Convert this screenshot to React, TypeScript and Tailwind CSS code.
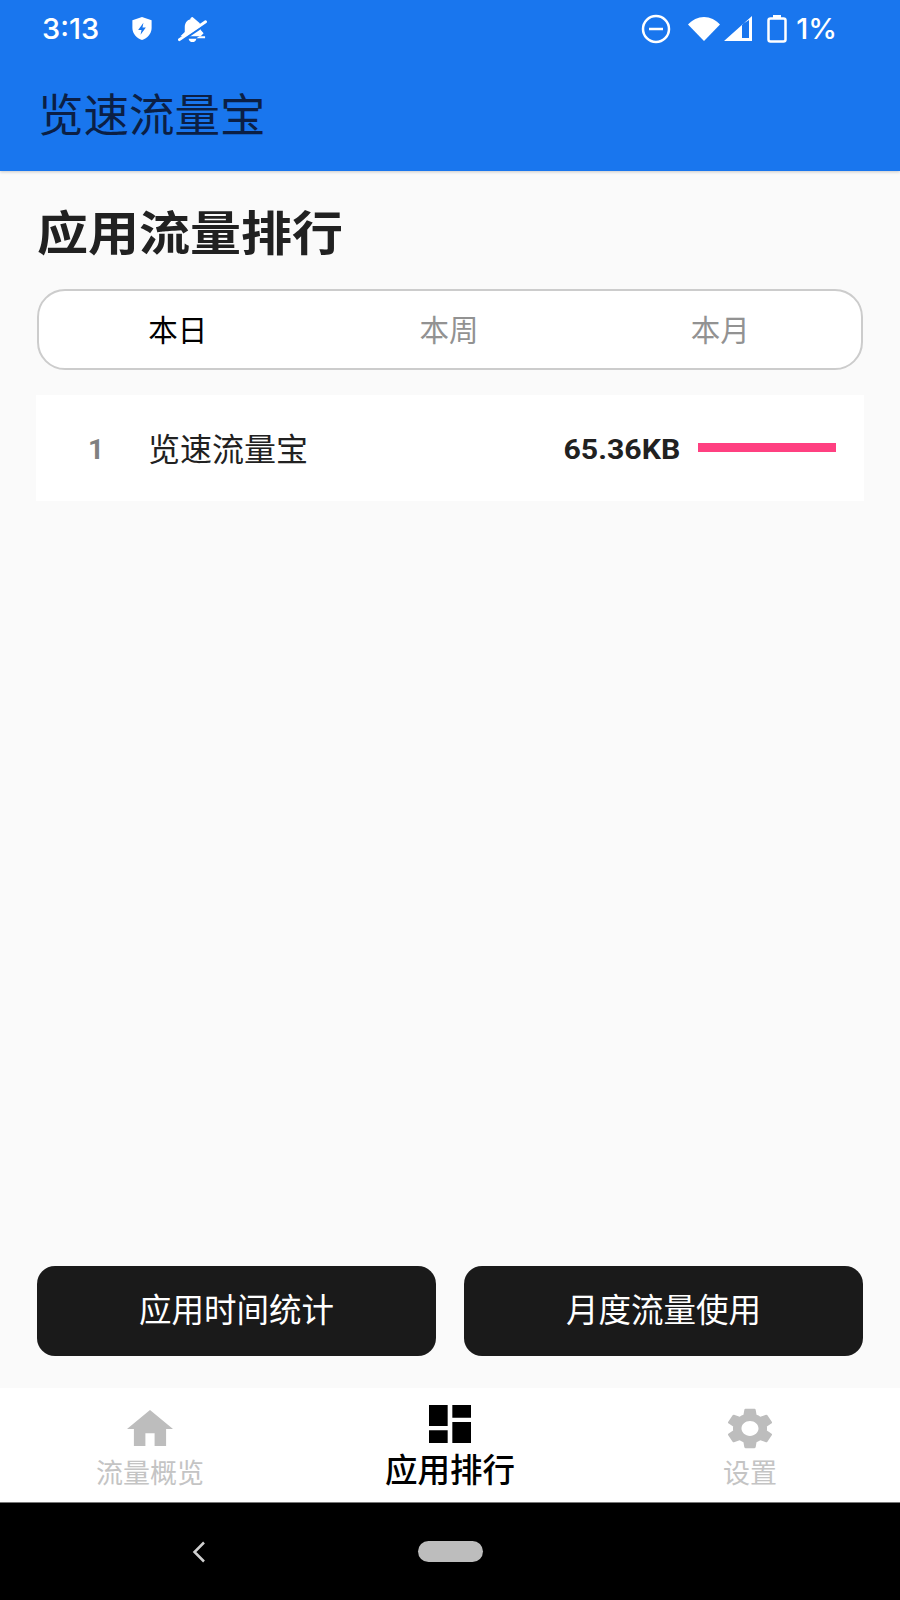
import React from "react";

const cjk = "font-['Roboto','Noto_Sans_CJK_SC',sans-serif]";

function StatusBar() {
  return (
    <div className="flex h-[56px] items-center pl-[42px] pr-[63px] pt-[1px] text-white">
      <span className="text-[29px] font-medium leading-none font-['Inter',sans-serif]">3:13</span>
      <svg className="ml-[31px]" width="24" height="25" viewBox="0 0 24 26" fill="none">
        <path d="M12 1 2 4.500v8C2 18.500 6.500 23 12 25c5.500-2 10-6.500 10-12.500v-8z" fill="#fff" />
        <path d="M13.500 7 8 14.500h3.500l-1 5 5.500-7.500h-3.500z" fill="#1976ee" />
      </svg>
      <svg className="ml-[24px] mt-[1px]" width="29" height="29" viewBox="0 0 30 28" fill="none">
        <path d="M15 1c-1.300 0-2.200 1-2.200 2.300C9 4.300 7 7.500 7 11.500v5L2.500 21h21l3-3-3-3.500v-3c0-1.500-.500-3-1.200-4.300z" fill="#fff" />
        <path d="M11 23.500h8c-.400 2.200-2 3.500-4 3.500s-3.600-1.300-4-3.500zM22 21h6v2H19z" fill="#fff" />
        <path d="M4 25.500 29 8.500" stroke="#1976ee" strokeWidth="2.500" />
        <path d="M1.500 24.500 28.500 6" stroke="#fff" strokeWidth="3" strokeLinecap="round" />
      </svg>
      <div className="ml-auto flex items-center">
        <svg width="30" height="30" viewBox="0 0 30 30" fill="none">
          <circle cx="15" cy="15" r="13" stroke="#fff" strokeWidth="2.500" />
          <path d="M8 15h14" stroke="#fff" strokeWidth="2.500" />
        </svg>
        <svg className="ml-[16px]" width="34" height="26" viewBox="0 0 34 26">
          <path d="M17 25 1 8.500C5 4 11 1 17 1s12 3 16 7.500z" fill="#fff" />
        </svg>
        <svg className="ml-[3px]" width="28" height="26" viewBox="0 0 28 26">
          <path d="M0 25 28 0v25zM18 8.500V22h7V4z" fill="#fff" fillRule="evenodd" />
        </svg>
        <svg className="ml-[15px]" width="20" height="28" viewBox="0 0 20 28" fill="none">
          <path d="M6 0h8v3H6z" fill="#fff" />
          <rect x="1.500" y="3.500" width="17" height="23" rx="2" stroke="#fff" strokeWidth="2.500" />
        </svg>
        <span className="ml-[9px] text-[29px] font-medium leading-none font-['Inter',sans-serif]">1%</span>
      </div>
    </div>
  );
}

function NavItem({ children }: { children: React.ReactNode }) {
  return <div className="flex flex-1 flex-col items-center">{children}</div>;
}

export default function App() {
  return (
    <div className={`flex h-[1600px] w-[900px] flex-col bg-[#fafafa] ${cjk}`}>
      <header className="h-[171px] bg-[#1976ee] shadow-[0_1px_3px_rgba(0,0,0,0.2)]">
        <StatusBar />
        <h1 className="mt-[31px] pl-[38px] text-[45.500px] leading-[60px] font-normal text-[#0b1f45]">览速流量宝</h1>
      </header>

      <main className="flex flex-1 flex-col px-[36px]">
        <h2 className="mt-[32px] origin-left scale-x-[1.085] pl-[1px] text-[47px] leading-[62px] font-bold text-[#212121]">应用流量排行</h2>

        <div className="mx-[1px] mt-[24px] flex h-[81px] items-center rounded-[28px] border-2 border-[#cccccc] bg-white px-[4px]">
          <div className="flex-1 pt-[4px] pr-[2px] text-center text-[29.500px] text-black">本日</div>
          <div className="flex-1 pt-[4px] pr-[2px] text-center text-[29.500px] text-[#929292]">本周</div>
          <div className="flex-1 pt-[4px] pr-[2px] text-center text-[29.500px] text-[#929292]">本月</div>
        </div>

        <div className="mt-[25px] flex h-[106px] items-center bg-white pl-[52px] pr-[28px]">
          <span className="w-[60px] pt-[4px] text-[28px] font-bold text-[#808080]">1</span>
          <span className="flex-1 pt-[4px] text-[32px] text-[#212121]">览速流量宝</span>
          <span className="origin-right scale-x-[1.12] pt-[4px] text-[27px] font-bold text-[#212121]">65.36KB</span>
          <div className="ml-[18px] mb-[2px] h-[9px] w-[138px] bg-[#ff4081]" />
        </div>

        <div className="mx-[1px] mt-auto mb-[32px] flex gap-[28px]">
          <button className="h-[90px] flex-1 rounded-[18px] bg-[#1a1a1a] text-[32.500px] text-white">应用时间统计</button>
          <button className="h-[90px] flex-1 rounded-[18px] bg-[#1a1a1a] text-[32.500px] text-white">月度流量使用</button>
        </div>
      </main>

      <nav className="flex h-[114px] bg-white">
        <NavItem>
          <svg className="mt-[22px] h-[36px] w-[46px]" viewBox="2 3 20 17" preserveAspectRatio="none" fill="#bdbdbd">
            <path d="M10 20v-6h4v6h5v-8h3L12 3 2 12h3v8z" />
          </svg>
          <span className="mt-[10px] text-[27px] leading-[36px] text-[#c4c4c4]">流量概览</span>
        </NavItem>
        <NavItem>
          <svg className="mt-[17px] h-[38px] w-[42px]" viewBox="3 3 18 18" preserveAspectRatio="none" fill="#000">
            <path d="M3 13h8V3H3v10zm0 8h8v-6H3v6zm10 0h8V11h-8v10zm0-18v6h8V3h-8z" />
          </svg>
          <span className="mt-[9px] text-[32.500px] leading-[38px] font-medium text-black">应用排行</span>
        </NavItem>
        <NavItem>
          <svg className="mt-[20px] h-[41px] w-[44px]" viewBox="2.700 2 18.600 20" preserveAspectRatio="none" fill="#bdbdbd">
            <path d="M19.140 12.940c.040-.300.060-.610.060-.940 0-.320-.020-.640-.070-.940l2.030-1.580c.180-.140.230-.410.120-.610l-1.920-3.320c-.120-.220-.370-.290-.590-.220l-2.390.960c-.500-.380-1.030-.700-1.620-.940l-.360-2.540c-.040-.240-.240-.410-.480-.410h-3.840c-.240 0-.430.170-.470.410l-.360 2.540c-.590.240-1.130.570-1.620.940l-2.390-.960c-.220-.080-.470 0-.590.220L2.740 8.870c-.120.210-.080.470.120.610l2.030 1.580c-.050.300-.090.630-.090.940s.020.640.070.940l-2.030 1.580c-.180.140-.230.410-.120.610l1.920 3.320c.120.220.370.290.590.220l2.390-.960c.500.380 1.030.700 1.620.940l.360 2.540c.050.240.240.410.480.410h3.840c.240 0 .440-.170.470-.410l.360-2.540c.590-.240 1.130-.560 1.620-.940l2.390.960c.220.080.470 0 .590-.220l1.920-3.320c.120-.220.070-.470-.120-.610l-2.010-1.580zM12 15.600c-1.980 0-3.600-1.620-3.600-3.600s1.620-3.600 3.600-3.600 3.600 1.620 3.600 3.600-1.620 3.600-3.600 3.600z" />
          </svg>
          <span className="mt-[7px] text-[27px] leading-[36px] text-[#c4c4c4]">设置</span>
        </NavItem>
      </nav>

      <div className="relative flex h-[98px] items-center justify-center border-t border-[#777] bg-black">
        <svg className="absolute left-[191px] top-[38px]" width="16" height="22" viewBox="0 0 16 22" fill="none">
          <path d="M13 1.500 3.500 11 13 20.500" stroke="#d0d0d0" strokeWidth="2.500" />
        </svg>
        <div className="h-[21px] w-[65px] rounded-full bg-[#bdbdbd]" />
      </div>
    </div>
  );
}
